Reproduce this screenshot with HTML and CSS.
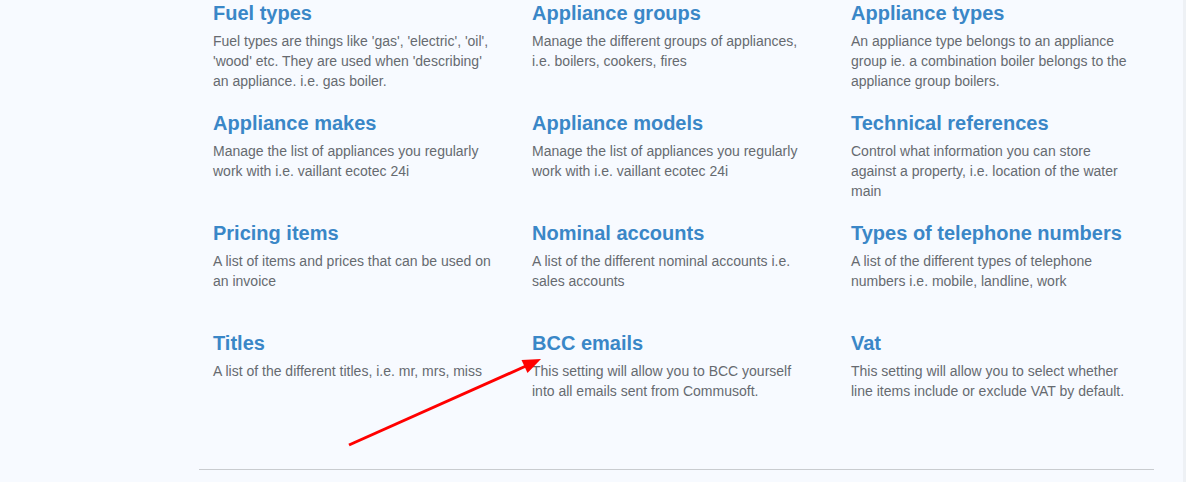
FILE: index.html
```html
<!DOCTYPE html>
<html>
<head>
<meta charset="utf-8">
<link rel="stylesheet" href="styles.css">
</head>
<body>
<div class="page">
  <main class="content">
    <div class="grid">
      <div class="item"><h3>Fuel types</h3><p>Fuel types are things like 'gas', 'electric', 'oil', 'wood' etc. They are used when 'describing' an appliance. i.e. gas boiler.</p></div>
      <div class="item"><h3>Appliance groups</h3><p>Manage the different groups of appliances, i.e. boilers, cookers, fires</p></div>
      <div class="item"><h3>Appliance types</h3><p>An appliance type belongs to an appliance group ie. a combination boiler belongs to the appliance group boilers.</p></div>
      <div class="item"><h3>Appliance makes</h3><p>Manage the list of appliances you regularly work with i.e. vaillant ecotec 24i</p></div>
      <div class="item"><h3>Appliance models</h3><p>Manage the list of appliances you regularly work with i.e. vaillant ecotec 24i</p></div>
      <div class="item"><h3>Technical references</h3><p>Control what information you can store against a property, i.e. location of the water main</p></div>
      <div class="item"><h3>Pricing items</h3><p>A list of items and prices that can be used on an invoice</p></div>
      <div class="item"><h3>Nominal accounts</h3><p>A list of the different nominal accounts i.e. sales accounts</p></div>
      <div class="item"><h3>Types of telephone numbers</h3><p>A list of the different types of telephone numbers i.e. mobile, landline, work</p></div>
      <div class="item"><h3>Titles</h3><p>A list of the different titles, i.e. mr, mrs, miss</p></div>
      <div class="item"><h3>BCC emails</h3><p>This setting will allow you to BCC yourself into all emails sent from Commusoft.</p></div>
      <div class="item"><h3>Vat</h3><p>This setting will allow you to select whether line items include or exclude VAT by default.</p></div>
    </div>
    <hr class="rule">
  </main>
  <div class="edge"></div>
  <svg class="arrow" width="1186" height="482" viewBox="0 0 1186 482">
    <line x1="349" y1="445" x2="526" y2="366" stroke="#ff0000" stroke-width="3"/>
    <polygon points="541,359 521.5,360 527.5,373" fill="#ff0000"/>
  </svg>
</div>
</body>
</html>
```
FILE: styles.css
```css
html, body {
  margin: 0;
  padding: 0;
  background: #f7faff;
}
body {
  font-family: "Liberation Sans", Arial, sans-serif;
  width: 1186px;
  height: 482px;
  overflow: hidden;
}
.page {
  position: relative;
  display: flex;
  height: 482px;
}
.content {
  flex: 1;
  padding-left: 199px;
}
.grid {
  display: grid;
  grid-template-columns: repeat(3, 319px);
}
.item {
  height: 110px;
  padding: 0 25px 0 14px;
  box-sizing: border-box;
}
.item h3 {
  margin: 0 0 5px;
  font-size: 20px;
  line-height: 26px;
  font-weight: bold;
  color: #3a87c7;
}
.item p {
  margin: 0;
  font-size: 14px;
  line-height: 20px;
  color: #666a70;
}
.rule {
  width: 955px;
  margin: 29px 0 0;
  border: 0;
  border-top: 1px solid #c9ccd0;
  height: 0;
}
.edge {
  width: 3px;
  background: #eef1f5;
}
.arrow {
  position: absolute;
  left: 0;
  top: 0;
  pointer-events: none;
}
```
